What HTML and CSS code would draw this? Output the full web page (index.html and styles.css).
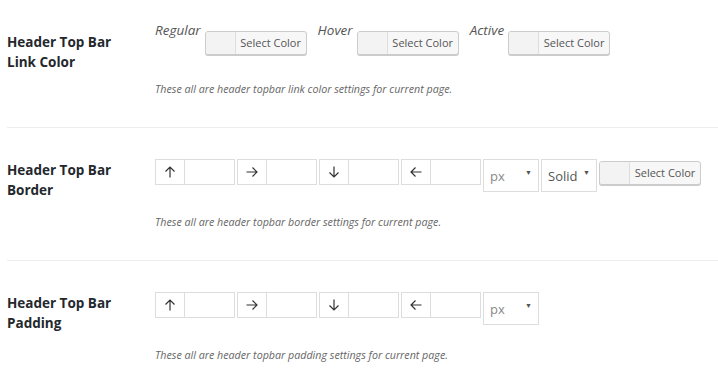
FILE: index.html
```html
<!DOCTYPE html>
<html>
<head>
  <meta charset="UTF-8">
  <link rel="stylesheet" href="styles.css">
  <title>Header Top Bar Settings</title>
</head>
<body>
  <div class="settings">
    <!-- link color -->
    <div class="row">
      <div class="row-label">Header Top Bar<br>Link Color</div>
      <div class="row-field">
        <div class="controls">
          <div class="state-group">
            <span class="state">Regular</span>
            <button type="button" class="color-btn"><span class="swatch"></span><span class="btn-text">Select Color</span></button>
          </div>
          <div class="state-group">
            <span class="state">Hover</span>
            <button type="button" class="color-btn"><span class="swatch"></span><span class="btn-text">Select Color</span></button>
          </div>
          <div class="state-group">
            <span class="state">Active</span>
            <button type="button" class="color-btn"><span class="swatch"></span><span class="btn-text">Select Color</span></button>
          </div>
        </div>
        <p class="desc desc-wide">These all are header topbar link color settings for current page.</p>
      </div>
    </div>

    <!-- border -->
    <div class="row">
      <div class="row-label">Header Top Bar<br>Border</div>
      <div class="row-field">
        <div class="controls">
          <div class="side">
            <span class="side-icon"><svg width="12" height="12" viewBox="0 0 12 12"><path d="M6 11.5V1M1.5 5.5L6 1l4.5 4.5"/></svg></span>
            <input type="text" class="side-input">
          </div>
          <div class="side">
            <span class="side-icon"><svg width="12" height="12" viewBox="0 0 12 12"><path d="M0.5 6H11M6.5 1.5L11 6l-4.5 4.5"/></svg></span>
            <input type="text" class="side-input">
          </div>
          <div class="side">
            <span class="side-icon"><svg width="12" height="12" viewBox="0 0 12 12"><path d="M6 0.5V11M1.5 6.5L6 11l4.5-4.5"/></svg></span>
            <input type="text" class="side-input">
          </div>
          <div class="side">
            <span class="side-icon"><svg width="12" height="12" viewBox="0 0 12 12"><path d="M11.5 6H1M5.5 1.5L1 6l4.5 4.5"/></svg></span>
            <input type="text" class="side-input">
          </div>
          <div class="pick pick-unit"><span class="pick-value">px</span><span class="pick-arrow">&#9660;</span></div>
          <div class="pick"><span class="pick-value">Solid</span><span class="pick-arrow">&#9660;</span></div>
          <button type="button" class="color-btn color-btn-inline"><span class="swatch"></span><span class="btn-text">Select Color</span></button>
        </div>
        <p class="desc">These all are header topbar border settings for current page.</p>
      </div>
    </div>

    <!-- padding -->
    <div class="row">
      <div class="row-label">Header Top Bar<br>Padding</div>
      <div class="row-field">
        <div class="controls">
          <div class="side">
            <span class="side-icon"><svg width="12" height="12" viewBox="0 0 12 12"><path d="M6 11.5V1M1.5 5.5L6 1l4.5 4.5"/></svg></span>
            <input type="text" class="side-input">
          </div>
          <div class="side">
            <span class="side-icon"><svg width="12" height="12" viewBox="0 0 12 12"><path d="M0.5 6H11M6.5 1.5L11 6l-4.5 4.5"/></svg></span>
            <input type="text" class="side-input">
          </div>
          <div class="side">
            <span class="side-icon"><svg width="12" height="12" viewBox="0 0 12 12"><path d="M6 0.5V11M1.5 6.5L6 11l4.5-4.5"/></svg></span>
            <input type="text" class="side-input">
          </div>
          <div class="side">
            <span class="side-icon"><svg width="12" height="12" viewBox="0 0 12 12"><path d="M11.5 6H1M5.5 1.5L1 6l4.5 4.5"/></svg></span>
            <input type="text" class="side-input">
          </div>
          <div class="pick pick-unit"><span class="pick-value">px</span><span class="pick-arrow">&#9660;</span></div>
        </div>
        <p class="desc">These all are header topbar padding settings for current page.</p>
      </div>
    </div>
  </div>
</body>
</html>
```

FILE: styles.css
```css
body {
  margin: 0;
  background: #fff;
  font-family: "Open Sans", "Noto Sans", sans-serif;
  color: #23282d;
}
.settings {
  padding-left: 7px;
}
.row {
  display: grid;
  grid-template-columns: 148px 1fr;
  border-bottom: 1px solid #eee;
}
.row-label {
  padding-top: 32px;
  font-size: 13.5px;
  font-weight: 700;
  line-height: 20px;
  color: #23282d;
}
.row-field {
  padding: 31px 0 30px 0;
}
.controls {
  display: flex;
  align-items: flex-start;
}
.state-group {
  display: flex;
  align-items: flex-start;
  margin-right: 11px;
}
.state {
  margin-top: -11px;
  margin-right: 4px;
  font-size: 13.5px;
  font-style: italic;
  line-height: 20px;
  color: #555;
}
.color-btn {
  display: flex;
  flex: none;
  width: 102px;
  height: 24px;
  padding: 0;
  border: 1px solid #ccc;
  border-radius: 3px;
  background: #f7f7f7;
  box-shadow: 0 1px 0 #ccc;
  font-family: inherit;
  cursor: pointer;
}
.color-btn-inline {
  margin-top: 2px;
}
.swatch {
  width: 29px;
  height: 100%;
  border-right: 1px solid #ddd;
  border-radius: 2px 0 0 2px;
  background: #f3f3f3;
}
.btn-text {
  flex: 1;
  font-size: 11px;
  line-height: 22px;
  color: #555;
  text-align: center;
}
.side {
  display: flex;
  flex: none;
  width: 80px;
  height: 26px;
  margin-right: 2px;
  border: 1px solid #ddd;
  box-sizing: border-box;
}
.side-icon {
  display: flex;
  flex: none;
  align-items: center;
  justify-content: center;
  width: 28px;
  border-right: 1px solid #ddd;
}
.side-icon svg {
  fill: none;
  stroke: #333;
  stroke-width: 1.2;
}
.side-input {
  flex: 1;
  width: 0;
  min-width: 0;
  padding: 0;
  border: none;
  outline: none;
  background: #fff;
}
.pick {
  display: flex;
  flex: none;
  align-items: flex-end;
  justify-content: space-between;
  width: 56px;
  height: 33px;
  margin-right: 2px;
  padding: 0 6px 6px 6px;
  border: 1px solid #ddd;
  box-sizing: border-box;
  font-size: 13px;
  color: #555;
}
.pick-unit .pick-value {
  color: #888;
}
.pick-arrow {
  margin-bottom: 8px;
  font-size: 7px;
  color: #555;
}
.desc {
  margin: 22px 0 0 0;
  font-size: 10.7px;
  font-style: italic;
  line-height: 16px;
  color: #666;
}
.desc-wide {
  margin-top: 26px;
}
```
